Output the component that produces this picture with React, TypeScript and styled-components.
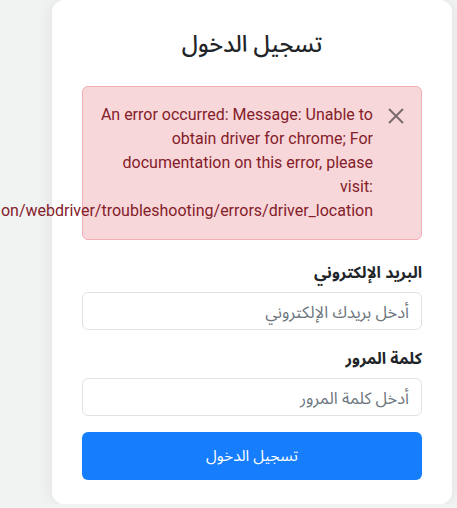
import React from "react";
import styled, { createGlobalStyle } from "styled-components";

const Global = createGlobalStyle`
  html, body { margin: 0; padding: 0; }
  body {
    background: #f1f3f3;
    font-family: "Segoe UI", "Open Sans", "Noto Sans Arabic", "DejaVu Sans", sans-serif;
    color: #212529;
    overflow: hidden;
  }
`;

const Page = styled.div`
  display: flex;
  justify-content: flex-start;
  padding-left: 52px;
`;

const Card = styled.div`
  direction: rtl;
  width: 400px;
  box-sizing: border-box;
  background: #fff;
  border-radius: 12px;
  box-shadow: 0 0 18px rgba(0, 0, 0, 0.08);
  padding: 26px 30px 24px;
`;

const Title = styled.h2`
  margin: 0 0 26px;
  text-align: center;
  font-size: 23px;
  line-height: 34px;
  font-weight: 500;
  color: #212529;
`;

const Alert = styled.div`
  position: relative;
  background: #f8d7da;
  border: 1px solid #f1aeb5;
  border-radius: 6px;
  color: #842029;
  padding: 16px 48px 16px 16px;
  font-family: Roboto, "Open Sans", sans-serif;
  font-size: 16px;
  line-height: 24px;
  margin-bottom: 20px;
`;

const CloseButton = styled.button`
  position: absolute;
  top: 0;
  right: 0;
  width: 50px;
  height: 58px;
  border: 0;
  background: transparent;
  padding: 0;
  display: flex;
  align-items: center;
  justify-content: center;
  cursor: pointer;
`;

const Field = styled.div`
  display: flex;
  flex-direction: column;
  margin-bottom: 16px;
`;

const Label = styled.label`
  font-weight: 700;
  font-size: 16px;
  line-height: 24px;
  margin-bottom: 8px;
`;

const Input = styled.input`
  direction: rtl;
  box-sizing: border-box;
  height: 38px;
  padding: 6px 12px;
  font-size: 16.5px;
  line-height: 24px;
  font-family: inherit;
  border: 1px solid #dee2e6;
  border-radius: 6px;
  color: #212529;
  background: #fff;
  &::placeholder { color: #6c757d; }
`;

const Submit = styled.button`
  width: 100%;
  height: 48px;
  border: 0;
  border-radius: 6px;
  background: #167dfc;
  color: #fff;
  font-family: inherit;
  font-size: 15.5px;
  cursor: pointer;
`;

export default function App() {
  return (
    <>
      <Global />
      <Page>
        <Card>
          <Title>تسجيل الدخول</Title>
          <Alert role="alert">
            An error occurred: Message: Unable to obtain driver for chrome; For documentation on this error, please visit: https://www.selenium.dev/documentation/webdriver/troubleshooting/errors/driver_location
            <CloseButton aria-label="Close">
              <svg width="16" height="16" viewBox="0 0 16 16">
                <path d="M1 1L15 15M15 1L1 15" stroke="#7a6a6c" strokeWidth="2" />
              </svg>
            </CloseButton>
          </Alert>
          <Field>
            <Label htmlFor="email">البريد الإلكتروني</Label>
            <Input id="email" type="email" placeholder="أدخل بريدك الإلكتروني" />
          </Field>
          <Field>
            <Label htmlFor="password">كلمة المرور</Label>
            <Input id="password" type="password" placeholder="أدخل كلمة المرور" />
          </Field>
          <Submit type="submit">تسجيل الدخول</Submit>
        </Card>
      </Page>
    </>
  );
}
